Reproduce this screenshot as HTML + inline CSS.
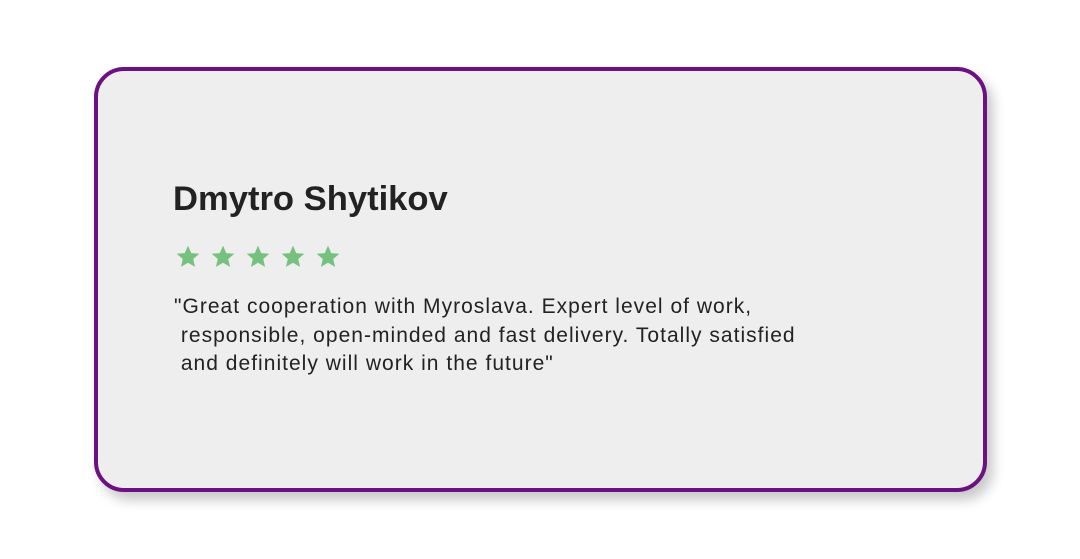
<!DOCTYPE html>
<html><head><meta charset="utf-8"><style>
html,body{margin:0;padding:0;background:#fff;width:1080px;height:559px;overflow:hidden}
.card{position:absolute;left:94px;top:67px;width:885px;height:417px;border:4px solid #6b1182;border-radius:30px;background:#eeeeee;box-shadow:6px 8px 12px rgba(0,0,0,0.22)}
h1{position:absolute;left:173px;top:180px;margin:0;font:bold 34.6px "Liberation Sans",sans-serif;color:#222;white-space:nowrap}
.stars{position:absolute;left:175px;top:244px}
.stars svg{position:absolute;top:0}
p{position:absolute;left:174px;top:293px;margin:0;font:21px/28.7px "Liberation Sans",sans-serif;color:#222;white-space:pre;letter-spacing:1.02px}
</style></head><body>
<div class="card"></div>
<h1>Dmytro Shytikov</h1>
<div class="stars">
<svg style="left:0" width="26" height="25" viewBox="0 0 24 24"><path fill="#77c17e" d="M12 1.5l3.1 7.2 7.8.6-5.9 5.1 1.8 7.6L12 18l-6.8 4 1.8-7.6-5.9-5.1 7.8-.6z"/></svg>
<svg style="left:35px" width="26" height="25" viewBox="0 0 24 24"><path fill="#77c17e" d="M12 1.5l3.1 7.2 7.8.6-5.9 5.1 1.8 7.6L12 18l-6.8 4 1.8-7.6-5.9-5.1 7.8-.6z"/></svg>
<svg style="left:70px" width="26" height="25" viewBox="0 0 24 24"><path fill="#77c17e" d="M12 1.5l3.1 7.2 7.8.6-5.9 5.1 1.8 7.6L12 18l-6.8 4 1.8-7.6-5.9-5.1 7.8-.6z"/></svg>
<svg style="left:105px" width="26" height="25" viewBox="0 0 24 24"><path fill="#77c17e" d="M12 1.5l3.1 7.2 7.8.6-5.9 5.1 1.8 7.6L12 18l-6.8 4 1.8-7.6-5.9-5.1 7.8-.6z"/></svg>
<svg style="left:140px" width="26" height="25" viewBox="0 0 24 24"><path fill="#77c17e" d="M12 1.5l3.1 7.2 7.8.6-5.9 5.1 1.8 7.6L12 18l-6.8 4 1.8-7.6-5.9-5.1 7.8-.6z"/></svg>
</div>
<p>"Great cooperation with Myroslava. Expert level of work,
 responsible, open-minded and fast delivery. Totally satisfied
 and definitely will work in the future"</p>
</body></html>
